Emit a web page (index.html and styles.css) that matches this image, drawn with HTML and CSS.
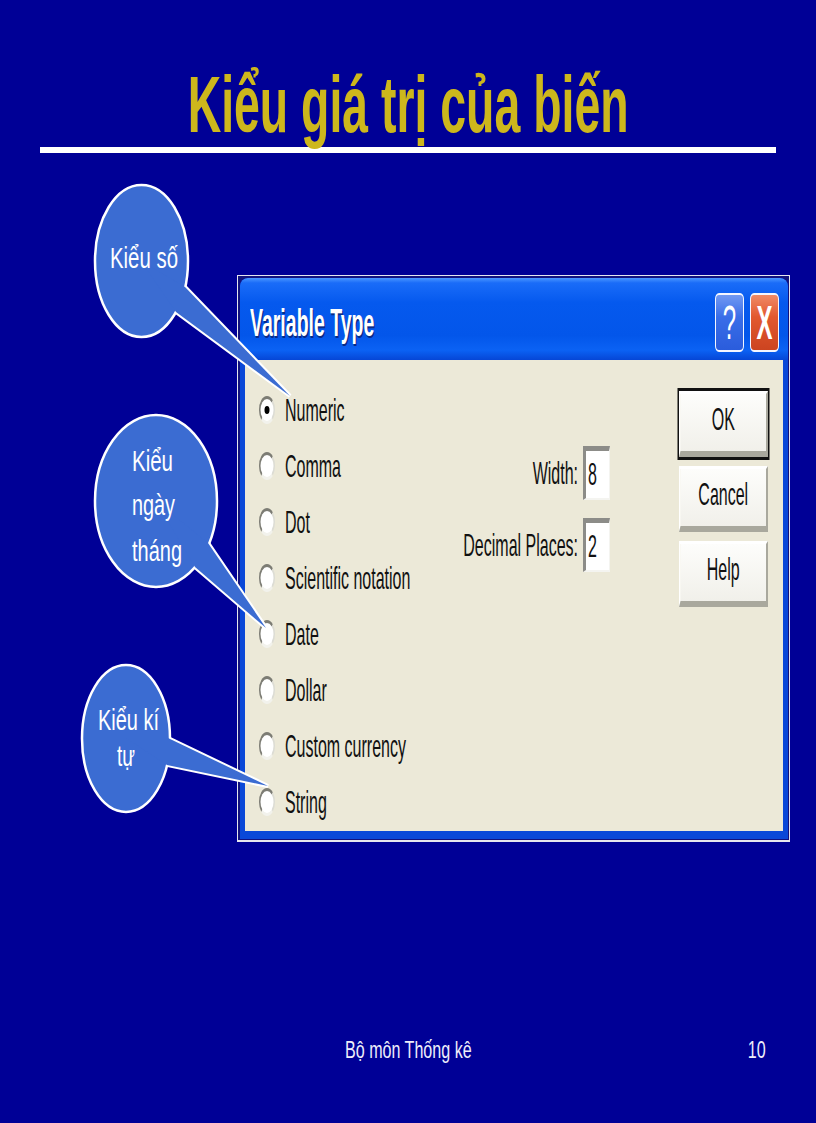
FILE: index.html
```html
<!DOCTYPE html>
<html lang="vi">
<head>
<meta charset="utf-8">
<title>Kiểu giá trị của biến</title>
<link rel="stylesheet" href="styles.css">
</head>
<body>
<div class="slide">
  <h1 class="title"><span class="title-text">Kiểu giá trị của biến</span></h1>
  <div class="rule"></div>

  <div class="shot">
    <div class="win">
      <div class="titlebar">
        <div class="tb-in">
          <span class="wtitle">Variable Type</span>
          <div class="tbtns">
            <span class="tb tb-help">?</span>
            <span class="tb tb-close">X</span>
          </div>
        </div>
      </div>
      <div class="body">
        <div class="body-in">
          <div class="radios">
            <div class="radio-row"><span class="radio checked"></span><span class="rlabel">Numeric</span></div>
            <div class="radio-row"><span class="radio"></span><span class="rlabel">Comma</span></div>
            <div class="radio-row"><span class="radio"></span><span class="rlabel">Dot</span></div>
            <div class="radio-row"><span class="radio"></span><span class="rlabel">Scientific notation</span></div>
            <div class="radio-row"><span class="radio"></span><span class="rlabel">Date</span></div>
            <div class="radio-row"><span class="radio"></span><span class="rlabel">Dollar</span></div>
            <div class="radio-row"><span class="radio"></span><span class="rlabel">Custom currency</span></div>
            <div class="radio-row"><span class="radio"></span><span class="rlabel">String</span></div>
          </div>
          <div class="fields">
            <span class="flabel">Width:</span><span class="fbox">8</span>
            <span class="flabel">Decimal Places:</span><span class="fbox">2</span>
          </div>
          <div class="buttons">
            <div class="btn default">OK</div>
            <div class="btn">Cancel</div>
            <div class="btn">Help</div>
          </div>
        </div>
      </div>
    </div>
  </div>

  <div class="footer">
    <span class="fl">Bộ môn Thống kê</span>
    <span class="fr">10</span>
  </div>

  <svg class="callouts" viewBox="0 0 816 1123" width="816" height="1123" xmlns="http://www.w3.org/2000/svg">
    <g class="co">
      <polygon class="tail" points="185,287 290,396 176,312"/>
      <ellipse class="bub" cx="141.5" cy="261" rx="46.5" ry="76"/>
      <polygon class="tailfill" points="185,287 290,396 176,312 141,261"/>
      <text x="110" y="268" textLength="68" lengthAdjust="spacingAndGlyphs">Kiểu số</text>
    </g>
    <g class="co">
      <polygon class="tail" points="208,543 266,628 195,567"/>
      <ellipse class="bub" cx="156" cy="501" rx="61" ry="86"/>
      <polygon class="tailfill" points="208,543 266,628 195,567 156,501"/>
      <text x="132" y="471" textLength="41" lengthAdjust="spacingAndGlyphs">Kiểu</text>
      <text x="132" y="515" textLength="43" lengthAdjust="spacingAndGlyphs">ngày</text>
      <text x="132" y="561" textLength="50" lengthAdjust="spacingAndGlyphs">tháng</text>
    </g>
    <g class="co">
      <polygon class="tail" points="168,738 268,786 167,765"/>
      <ellipse class="bub" cx="126" cy="738.5" rx="44" ry="73.5"/>
      <polygon class="tailfill" points="168,738 268,786 167,765 126,738"/>
      <text x="98" y="730" textLength="61" lengthAdjust="spacingAndGlyphs">Kiểu kí</text>
      <text x="117" y="766" textLength="18" lengthAdjust="spacingAndGlyphs">tự</text>
    </g>
  </svg>
</div>
</body>
</html>
```

FILE: styles.css
```css
* { box-sizing: border-box; }
html, body { margin: 0; padding: 0; }
body {
  background: #000096;
  font-family: "Liberation Sans", Arial, sans-serif;
}
.slide {
  position: relative;
  width: 816px;
  height: 1123px;
  background: #000096;
  overflow: hidden;
}

/* Slide title */
.title {
  margin: 0;
  padding-top: 62px;
  height: 147px;
  text-align: center;
  font-size: 80px;
  line-height: 85px;
  font-weight: bold;
  color: #cdb71c;
}
.title-text {
  display: inline-block;
  white-space: nowrap;
  transform: scaleX(0.58);
  transform-origin: 50% 50%;
}
.rule {
  height: 6px;
  margin: 0 40px;
  background: #ffffff;
}

/* Screenshot of the dialog */
.shot {
  margin: 122px 0 0 237px;
  width: 553px;
  border: 1px solid #e6e6ee;
  border-bottom-width: 2px;
  padding: 2px 1px 1px 2px;
  background: #12127e;
}
.win {
  height: 561px;
  background: #0a48d8;
  border-radius: 8px 8px 0 0;
  padding-bottom: 8px;
  display: flex;
  flex-direction: column;
  overflow: hidden;
}
.titlebar {
  height: 82px;
  flex: none;
  background: linear-gradient(#4a95ff 0, #1a6cf8 6%, #0559ee 30%, #0356ea 70%, #0b62f4 88%, #0646d6 100%);
  border-radius: 8px 8px 0 0;
  overflow: hidden;
}
.tb-in {
  width: 1096px;
  height: 82px;
  transform: scaleX(0.5);
  transform-origin: 0 0;
  display: flex;
  align-items: center;
  padding: 0 18px 0 20px;
}
.wtitle {
  flex: 1;
  padding-top: 8px;
  font-size: 39px;
  font-weight: bold;
  color: #ffffff;
  text-shadow: 2px 2px 0 #0a2a86;
  white-space: nowrap;
}
.tbtns {
  align-self: flex-start;
  margin-top: 15px;
  display: flex;
  gap: 12px;
}
.tb {
  width: 58px;
  height: 59px;
  border: 2px solid #f4f6ff;
  border-radius: 8px / 6px;
  color: #ffffff;
  font-size: 48px;
  line-height: 1;
  display: flex;
  align-items: center;
  justify-content: center;
}
.tb-help { background: linear-gradient(#7299f2, #3a6ee8 40%, #2a5cdc); }
.tb-close {
  font-weight: bold;
  background: linear-gradient(#f08a66, #e2582f 40%, #cc4420);
}

/* Dialog body */
.body {
  flex: 1;
  margin: 0 5px;
  background: #ece9d8;
  overflow: hidden;
}
.body-in {
  width: 1076px;
  height: 100%;
  transform: scaleX(0.5);
  transform-origin: 0 0;
  display: flex;
  align-items: flex-start;
  font-size: 32px;
  color: #111111;
}
.radios {
  margin: 22px 0 0 28px;
  width: 400px;
  flex: none;
}
.radio-row {
  display: flex;
  align-items: center;
  height: 56px;
  gap: 20px;
}
.radio {
  position: relative;
  flex: none;
  width: 32px;
  height: 28px;
  border-radius: 50%;
  border: 3px solid;
  border-color: #7c7c74 #dcdcd4 #f2f2ec #7c7c74;
  background: #ffffff;
}
.radio.checked::after {
  content: "";
  position: absolute;
  left: 50%;
  top: 50%;
  width: 10px;
  height: 8px;
  margin: -4px 0 0 -5px;
  border-radius: 50%;
  background: #000000;
}
.rlabel { white-space: nowrap; }

.fields {
  margin-top: 86px;
  width: 302px;
  flex: none;
  display: grid;
  grid-template-columns: 1fr 54px;
  column-gap: 10px;
  row-gap: 18px;
  align-items: center;
}
.flabel {
  justify-self: end;
  white-space: nowrap;
}
.fbox {
  height: 54px;
  display: flex;
  align-items: center;
  background: #ffffff;
  border-style: solid;
  border-width: 5px 2px 2px 6px;
  border-color: #8c8c88 #f4f4f0 #f4f4f0 #8c8c88;
  padding-left: 4px;
}

.buttons {
  margin: 31px 0 0 138px;
  width: 178px;
  flex: none;
  display: flex;
  flex-direction: column;
  gap: 9px;
}
.btn {
  height: 66px;
  display: flex;
  align-items: center;
  justify-content: center;
  padding-bottom: 6px;
  background: linear-gradient(#fdfdfb, #f1f0ea);
  border-style: solid;
  border-width: 3px 4px 6px 3px;
  border-color: #ffffff #a9a89d #a9a89d #ffffff;
}
.btn.default {
  box-shadow: 0 0 0 3px #111111;
}

/* Footer */
.footer {
  margin-top: 194px;
  display: flex;
  justify-content: space-between;
  padding: 0 50px 0 345px;
  font-size: 24px;
  line-height: 28px;
  color: #eeeefa;
}
.fl, .fr {
  display: inline-block;
  white-space: nowrap;
  transform: scaleX(0.67);
}
.fl { transform-origin: 0 50%; }
.fr { transform-origin: 100% 50%; }

/* Callouts drawn over the slide */
.callouts {
  position: absolute;
  left: 0;
  top: 0;
  pointer-events: none;
}
.co .tail {
  fill: #3b6cd2;
  stroke: #ffffff;
  stroke-width: 4;
  stroke-linejoin: miter;
}
.co .bub {
  fill: #3b6cd2;
  stroke: #ffffff;
  stroke-width: 2.5;
}
.co .tailfill {
  fill: #3b6cd2;
  stroke: none;
}
.co text {
  fill: #ffffff;
  font-family: "Liberation Sans", Arial, sans-serif;
  font-size: 30px;
}
```
